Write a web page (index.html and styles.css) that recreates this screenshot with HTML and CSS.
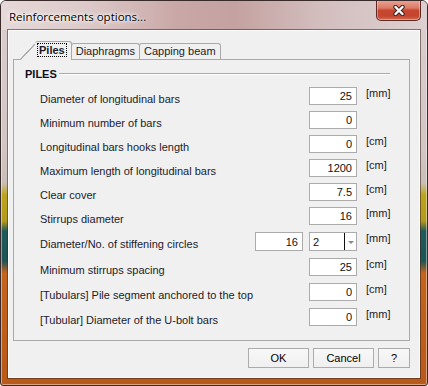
FILE: index.html
```html
<!DOCTYPE html>
<html>
<head>
<meta charset="utf-8">
<title>Reinforcements options...</title>
<link rel="stylesheet" href="styles.css">
</head>
<body>
<div class="window">
  <div class="titlebar">
    <span class="title">Reinforcements options...</span>
    <div class="close">
      <svg width="14" height="11" viewBox="0 0 14 11"><path d="M3.5 2 L10.5 9 M10.5 2 L3.5 9" stroke="#3a2626" stroke-width="4.4" stroke-linecap="round"/><path d="M3.5 2 L10.5 9 M10.5 2 L3.5 9" stroke="#ffffff" stroke-width="2.4" stroke-linecap="round"/></svg>
    </div>
  </div>
  <div class="client">
    <div class="tabs">
      <div class="tab active"><span class="focus">Piles</span></div>
      <div class="tab">Diaphragms</div>
      <div class="tab">Capping beam</div>
    </div>
    <div class="panel">
      <div class="heading">PILES</div>
      <div class="rows">
        <div class="row"><span class="label">Diameter of longitudinal bars</span><span class="input">25</span><span class="unit">[mm]</span></div>
        <div class="row"><span class="label">Minimum number of bars</span><span class="input">0</span></div>
        <div class="row"><span class="label">Longitudinal bars hooks length</span><span class="input">0</span><span class="unit">[cm]</span></div>
        <div class="row"><span class="label">Maximum length of longitudinal bars</span><span class="input">1200</span><span class="unit">[cm]</span></div>
        <div class="row"><span class="label">Clear cover</span><span class="input">7.5</span><span class="unit">[cm]</span></div>
        <div class="row"><span class="label">Stirrups diameter</span><span class="input">16</span><span class="unit">[mm]</span></div>
        <div class="row tall"><span class="label">Diameter/No. of stiffening circles</span><span class="input first">16</span><span class="combo"><span class="combo-text">2</span><span class="combo-sep"></span><span class="combo-arrow"></span></span><span class="unit">[mm]</span></div>
        <div class="row later"><span class="label">Minimum stirrups spacing</span><span class="input">25</span><span class="unit">[cm]</span></div>
        <div class="row later"><span class="label">[Tubulars] Pile segment anchored to the top</span><span class="input">0</span><span class="unit">[cm]</span></div>
        <div class="row later"><span class="label">[Tubular] Diameter of the U-bolt bars</span><span class="input">0</span><span class="unit">[mm]</span></div>
      </div>
    </div>
    <div class="buttons">
      <div class="btn ok">OK</div>
      <div class="btn cancel">Cancel</div>
      <div class="btn help">?</div>
    </div>
  </div>
</div>
</body>
</html>
```

FILE: styles.css
```css
* { box-sizing: border-box; }
html, body { margin: 0; padding: 0; }
body {
  width: 428px;
  height: 386px;
  overflow: hidden;
  background: #ffffff;
}
.window {
  width: 428px;
  height: 386px;
  display: flex;
  flex-direction: column;
  border: 1px solid #3a2b2b;
  border-radius: 6px 6px 3px 3px;
  box-shadow: inset 0 0 0 1px rgba(255,255,255,0.45);
  background: linear-gradient(to bottom,
    #dccece 0px,
    #d2c5c4 150px,
    #c9bfb6 182px,
    #bca420 194px,
    #b39a1c 220px,
    #1f5a59 230px,
    #1d5454 260px,
    #c3641f 272px,
    #b9591a 386px);
  overflow: hidden;
}
.titlebar {
  height: 29px;
  flex: none;
  display: flex;
  align-items: flex-start;
  padding-left: 8px;
  background: linear-gradient(to right,
    #e6d9d9 0%,
    #ddc9c9 20%,
    #c8a7a6 42%,
    #c4a2a1 55%,
    #d3bebe 75%,
    #ddd0d0 100%);
}
.title {
  font-family: "Open Sans", "Noto Sans", sans-serif;
  font-size: 11.5px;
  line-height: 16px;
  margin-top: 8px;
  color: #000;
  text-shadow: 0 0 6px #fff, 0 0 4px #fff, 0 0 2px #fff;
}
.close {
  margin-left: auto;
  margin-right: 6px;
  margin-top: -1px;
  width: 45px;
  height: 21px;
  border: 1px solid #5b2a22;
  border-top: none;
  border-radius: 0 0 5px 5px;
  background: linear-gradient(to bottom, #e9a698 0%, #dc7a66 40%, #c8452e 52%, #c4462f 80%, #d36a52 100%);
  box-shadow: inset 0 0 0 1px rgba(255,220,210,0.45);
  display: flex;
  align-items: center;
  justify-content: center;
}
.close svg { display: block; }
.client {
  flex: 1;
  margin: 0 7px 7px 7px;
  background: #f0f0f0;
  border: 1px solid rgba(255,255,255,0.8);
  box-shadow: 0 0 0 1px rgba(60,35,25,0.55);
  padding: 10px 9px 0 4px;
  display: flex;
  flex-direction: column;
  font-family: "Liberation Sans", Arial, sans-serif;
  font-size: 11px;
  color: #1b1b2b;
}
.tabs {
  height: 18px;
  display: flex;
  align-items: flex-end;
  padding-left: 22px;
  position: relative;
  z-index: 2;
}
.tab {
  height: 16px;
  border: 1px solid #a9a9a9;
  border-bottom: none;
  border-radius: 3px 3px 0 0;
  padding: 0 4px 0 4px;
  line-height: 15px;
  background: #f0f0f0;
  white-space: nowrap;
}
.tab + .tab { margin-left: -1px; }
.tab.active {
  height: 19px;
  margin-bottom: -1px;
  border-left: none;
  padding: 1px 4px 0 2px;
  position: relative;
  z-index: 3;
  font-weight: bold;
}
.tab.active::before {
  content: "";
  position: absolute;
  left: -15px;
  top: 2px;
  bottom: 0;
  width: 15px;
  background: linear-gradient(to top left,
    #f0f0f0 calc(50% - 0.9px),
    #a9a9a9 calc(50% - 0.4px),
    #a9a9a9 calc(50% + 0.4px),
    rgba(240,240,240,0) calc(50% + 0.9px));
}
.tab + .tab.active, .tab.active + .tab { }
.focus {
  display: inline-block;
  border: 1px dotted #000;
  line-height: 12px;
  padding: 0 1px;
}
.panel {
  border: 1px solid #a9a9a9;
  padding: 7px 19px 14px 11px;
  background: #f0f0f0;
}
.heading {
  display: flex;
  align-items: center;
  font-weight: bold;
  line-height: 14px;
  color: #10101a;
}
.heading::after {
  content: "";
  flex: 1;
  margin-left: 2px;
  border-top: 1px solid #a9a9a9;
  border-bottom: 1px solid #ffffff;
}
.rows {
  margin-top: 6px;
  padding-left: 15px;
  display: flex;
  flex-direction: column;
  gap: 6px;
}
.row {
  display: grid;
  grid-template-columns: 209px 48px 48px auto;
  column-gap: 6px;
  height: 18px;
}
.row.tall { height: 19px; margin-top: 1px; }
.row.later { margin-top: 1px; }
.label {
  grid-column: 1;
  white-space: nowrap;
  line-height: 14px;
  padding-top: 5px;
}
.input {
  grid-column: 3;
  height: 18px;
  border: 1px solid #ababab;
  background: #ffffff;
  text-align: right;
  padding-right: 4px;
  line-height: 17px;
  color: #111;
}
.row.tall .input { height: 19px; line-height: 18px; }
.input.first { grid-column: 2; }
.combo {
  grid-column: 3;
  height: 19px;
  border: 1px solid #ababab;
  background: #ffffff;
  display: flex;
  align-items: stretch;
}
.combo-text {
  flex: 1;
  padding-left: 3px;
  line-height: 18px;
  color: #111;
}
.combo-sep {
  width: 1px;
  margin: 0;
  background: #111;
}
.combo-arrow {
  width: 11px;
  position: relative;
}
.combo-arrow::after {
  content: "";
  position: absolute;
  left: 3px;
  top: 8px;
  border-left: 3px solid transparent;
  border-right: 3px solid transparent;
  border-top: 3px solid #8a8a8a;
}
.unit {
  grid-column: 4;
  margin-left: 3px;
  margin-top: -1px;
  line-height: 14px;
  white-space: nowrap;
}
.buttons {
  display: flex;
  justify-content: flex-end;
  gap: 4px;
  margin-top: 7px;
}
.btn {
  height: 20px;
  border: 1px solid #acacac;
  background: linear-gradient(to bottom, #f8f8f8, #efefef);
  text-align: center;
  line-height: 18px;
  color: #000;
}
.btn.ok { width: 61px; }
.btn.cancel { width: 61px; }
.btn.help { width: 32px; }
```
